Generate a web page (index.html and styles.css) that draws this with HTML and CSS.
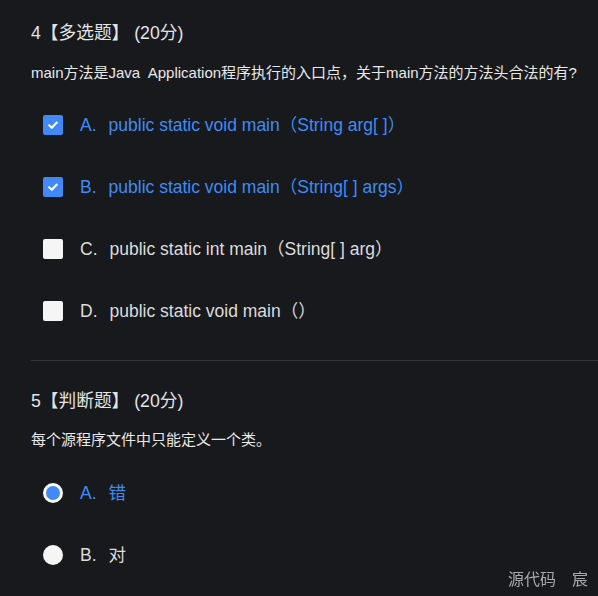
FILE: index.html
```html
<!DOCTYPE html>
<html lang="zh-CN">
<head>
<meta charset="utf-8">
<link rel="stylesheet" href="styles.css">
</head>
<body>
<div class="page">
  <section class="question">
    <h2 class="q-title">4【多选题】 (20分)</h2>
    <p class="q-text">main方法是Java&nbsp; Application程序执行的入口点，关于main方法的方法头合法的有?</p>
    <ul class="options">
      <li class="option selected">
        <span class="checkbox checked"><svg viewBox="0 0 20 20" width="20" height="20"><path d="M6.2 10.3 L8.8 12.8 L13.8 7.6" fill="none" stroke="#fff" stroke-width="2.2" stroke-linecap="round" stroke-linejoin="round"/></svg></span>
        <span class="label"><span class="letter">A.</span>public static void main（String arg[ ]）</span>
      </li>
      <li class="option selected">
        <span class="checkbox checked"><svg viewBox="0 0 20 20" width="20" height="20"><path d="M6.2 10.3 L8.8 12.8 L13.8 7.6" fill="none" stroke="#fff" stroke-width="2.2" stroke-linecap="round" stroke-linejoin="round"/></svg></span>
        <span class="label"><span class="letter">B.</span>public static void main（String[ ] args）</span>
      </li>
      <li class="option">
        <span class="checkbox"></span>
        <span class="label"><span class="letter">C.</span>public static int main（String[ ] arg）</span>
      </li>
      <li class="option">
        <span class="checkbox"></span>
        <span class="label"><span class="letter">D.</span>public static void main（）</span>
      </li>
    </ul>
  </section>
  <hr class="divider">
  <section class="question second">
    <h2 class="q-title">5【判断题】 (20分)</h2>
    <p class="q-text">每个源程序文件中只能定义一个类。</p>
    <ul class="options">
      <li class="option selected">
        <span class="radio checked"></span>
        <span class="label"><span class="letter">A.</span>错</span>
      </li>
      <li class="option">
        <span class="radio"></span>
        <span class="label"><span class="letter">B.</span>对</span>
      </li>
    </ul>
  </section>
</div>
<div class="watermark">源代码<span class="wm-gap"></span>宸</div>
</body>
</html>
```
FILE: styles.css
```css
* { box-sizing: border-box; }
html, body {
  margin: 0;
  padding: 0;
  background: #18191c;
}
body {
  font-family: "Liberation Sans", Arial, "Noto Sans CJK SC", sans-serif;
  color: #e2e2e2;
  width: 598px;
  height: 596px;
  overflow: hidden;
}
.page {
  padding-left: 31px;
  padding-top: 21px;
}
.q-title {
  margin: 0;
  font-size: 17.7px;
  font-weight: normal;
  line-height: 24px;
  color: #e4e4e4;
}
.q-text {
  margin: 17px 0 0;
  font-size: 15px;
  line-height: 22px;
  color: #e8e8e8;
  white-space: nowrap;
}
.options {
  list-style: none;
  margin: 10px 0 0;
  padding: 0;
}
.option {
  height: 62px;
  display: flex;
  align-items: center;
  padding-left: 12px;
  font-size: 17.5px;
  color: #dcdcdc;
}
.option.selected { color: #3d8cf5; }
.label {
  line-height: 24px;
  white-space: nowrap;
}
.checkbox {
  width: 20px;
  height: 20px;
  border-radius: 2px;
  background: #f5f5f5;
  margin-right: 17px;
  display: flex;
  flex-shrink: 0;
}
.checkbox.checked { background: #4089f7; }
.radio {
  width: 20px;
  height: 20px;
  border-radius: 50%;
  background: #f5f5f5;
  margin-right: 17px;
  flex-shrink: 0;
}
.radio.checked { background: #4089f7; border: 3px solid #fafafa; }
.letter {
  display: inline-block;
  margin-right: 12px;
}
.divider {
  border: 0;
  border-top: 1px solid #333438;
  margin: 18px 0 0;
}
.second { padding-top: 28px; }
.second .q-text { margin-top: 16px; }
.second .options { margin-top: 11px; }
.watermark {
  position: fixed;
  right: 10px;
  bottom: 8px;
  display: flex;
  font-size: 16px;
  color: #a8a8a8;
  font-family: "Noto Sans CJK SC", sans-serif;
  line-height: 20px;
}
.wm-gap { width: 16px; }
```
